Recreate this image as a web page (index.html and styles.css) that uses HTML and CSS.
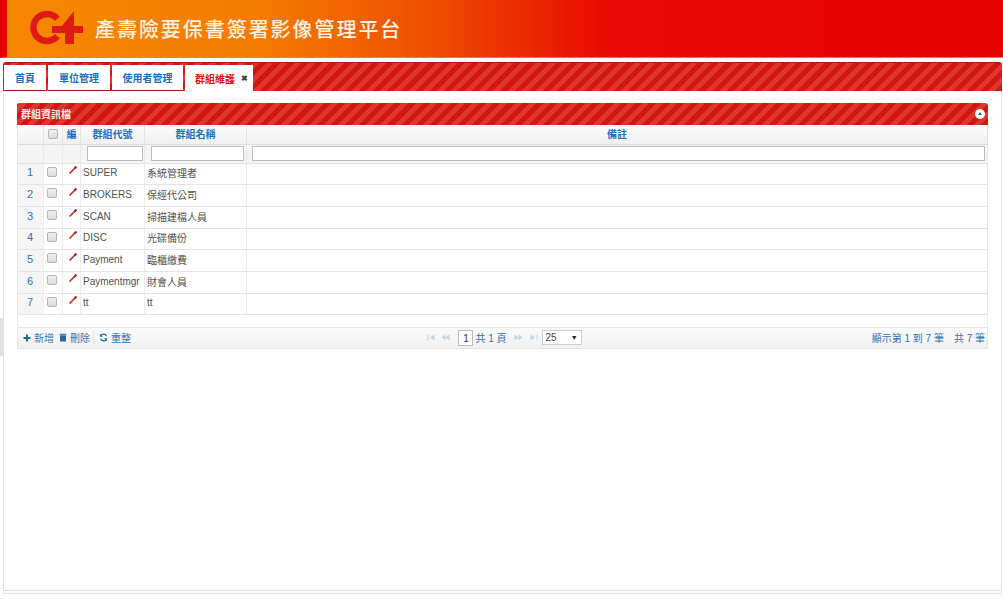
FILE: index.html
```html
<!DOCTYPE html>
<html lang="zh-Hant">
<head>
<meta charset="utf-8">
<title>產壽險要保書簽署影像管理平台</title>
<link rel="stylesheet" href="styles.css">
</head>
<body>
<header class="banner">
  <svg class="logo" width="53" height="34" viewBox="0 0 53 34">
    <path class="logo-c" d="M27.3 7.8 A13.5 13.5 0 1 0 27.3 25.2" />
    <path class="logo-plus" d="M44 0 L44 15 L53 15 L53 22 L44 22 L44 33 L35 33 L35 22 L22 22 L22 15 L32 15 Z" />
  </svg>
  <h1 class="banner-title">產壽險要保書簽署影像管理平台</h1>
</header>
<main class="workspace">
  <nav class="tabs">
    <a class="tab">首頁</a>
    <a class="tab">單位管理</a>
    <a class="tab">使用者管理</a>
    <a class="tab tab-active">群組維護 <span class="tab-close">✖</span></a>
  </nav>
  <section class="tab-body">
    <div class="panel">
      <div class="panel-title">
        <span>群組資訊檔</span>
        <span class="collapse"></span>
      </div>
      <table class="grid">
        <colgroup>
          <col class="c-num"><col class="c-check"><col class="c-edit"><col class="c-code"><col class="c-name"><col>
        </colgroup>
        <thead>
          <tr class="head-row">
            <th></th>
            <th><span class="box"></span></th>
            <th>編</th>
            <th>群組代號</th>
            <th>群組名稱</th>
            <th>備註</th>
          </tr>
          <tr class="filter-row">
            <th></th><th></th><th></th>
            <th><input class="filter f-code" type="text"></th>
            <th><input class="filter f-name" type="text"></th>
            <th><input class="filter f-note" type="text"></th>
          </tr>
        </thead>
        <tbody>
          <tr><td class="num">1</td><td class="chk"><span class="box"></span></td><td class="pen"><svg width="10" height="10" viewBox="0 0 10 10"><path d="M1.5 8.5 L7 3"/><path class="tip" d="M6.5 3.5 L8.5 1.5"/></svg></td><td>SUPER</td><td>系統管理者</td><td></td></tr>
          <tr><td class="num">2</td><td class="chk"><span class="box"></span></td><td class="pen"><svg width="10" height="10" viewBox="0 0 10 10"><path d="M1.5 8.5 L7 3"/><path class="tip" d="M6.5 3.5 L8.5 1.5"/></svg></td><td>BROKERS</td><td>保經代公司</td><td></td></tr>
          <tr><td class="num">3</td><td class="chk"><span class="box"></span></td><td class="pen"><svg width="10" height="10" viewBox="0 0 10 10"><path d="M1.5 8.5 L7 3"/><path class="tip" d="M6.5 3.5 L8.5 1.5"/></svg></td><td>SCAN</td><td>掃描建檔人員</td><td></td></tr>
          <tr><td class="num">4</td><td class="chk"><span class="box"></span></td><td class="pen"><svg width="10" height="10" viewBox="0 0 10 10"><path d="M1.5 8.5 L7 3"/><path class="tip" d="M6.5 3.5 L8.5 1.5"/></svg></td><td>DISC</td><td>光碟備份</td><td></td></tr>
          <tr><td class="num">5</td><td class="chk"><span class="box"></span></td><td class="pen"><svg width="10" height="10" viewBox="0 0 10 10"><path d="M1.5 8.5 L7 3"/><path class="tip" d="M6.5 3.5 L8.5 1.5"/></svg></td><td>Payment</td><td>臨櫃繳費</td><td></td></tr>
          <tr><td class="num">6</td><td class="chk"><span class="box"></span></td><td class="pen"><svg width="10" height="10" viewBox="0 0 10 10"><path d="M1.5 8.5 L7 3"/><path class="tip" d="M6.5 3.5 L8.5 1.5"/></svg></td><td>Paymentmgr</td><td>財會人員</td><td></td></tr>
          <tr><td class="num">7</td><td class="chk"><span class="box"></span></td><td class="pen"><svg width="10" height="10" viewBox="0 0 10 10"><path d="M1.5 8.5 L7 3"/><path class="tip" d="M6.5 3.5 L8.5 1.5"/></svg></td><td>tt</td><td>tt</td><td></td></tr>
        </tbody>
      </table>
      <div class="grid-spacer"></div>
      <div class="pager">
        <div class="pager-left">
          <span class="action"><svg width="8" height="8" viewBox="0 0 8 8"><path class="ico-fill" d="M3 0.5h2v2.5h2.5v2H5v2.5H3V5H0.5V3H3z"/></svg>新增</span>
          <span class="action"><svg width="8" height="9" viewBox="0 0 8 9"><path class="ico-fill" d="M1 2.2h6v6.3H1zM0.5 0.8h7v.9h-7z"/></svg>刪除</span>
          <span class="sep"></span>
          <span class="action"><svg width="9" height="9" viewBox="0 0 9 9"><path class="ico-line" d="M7.5 3.2A3.2 3.2 0 0 0 1.8 2.7M1.5 5.8A3.2 3.2 0 0 0 7.2 6.3"/><path class="ico-fill" d="M1 0.8v3h3zM8 8.2v-3h-3z"/></svg>重整</span>
        </div>
        <div class="pager-center">
          <svg class="nav" width="8" height="7" viewBox="0 0 8 7"><path d="M0.5 0.5h1v6h-1zM7.5 0.5v6L3 3.5z"/></svg>
          <svg class="nav" width="9" height="7" viewBox="0 0 9 7"><path d="M4.5 .5v6L0.5 3.5zM8.5 .5v6L4.5 3.5z"/></svg>
          <span class="page-box">1</span>
          <span class="page-text">共 1 頁</span>
          <svg class="nav nav-next" width="9" height="7" viewBox="0 0 9 7"><path d="M.5 .5v6L4.5 3.5zM4.5 .5v6L8.5 3.5z"/></svg>
          <svg class="nav" width="8" height="7" viewBox="0 0 8 7"><path d="M.5 .5v6L5 3.5zM6.5 .5h1v6h-1z"/></svg>
          <span class="page-size">25<span class="caret">▼</span></span>
        </div>
        <div class="pager-right">顯示第 1 到 7 筆　共 7 筆</div>
      </div>
    </div>
  </section>
  <div class="footer-line"></div>
</main>
<span class="side-handle"></span>
</body>
</html>
```
FILE: styles.css
```css
* { box-sizing: border-box; }
html, body { margin: 0; height: 599px; overflow: hidden; background: #fff; }
body {
  font-family: "Liberation Sans", "Noto Sans CJK TC", sans-serif;
  font-size: 10px;
  color: #444;
}
.banner {
  height: 58px;
  display: flex;
  align-items: center;
  gap: 12px;
  padding: 0 0 1px 23px;
  background: linear-gradient(90deg, #f68700 0%, #f47c00 25%, #ee5000 42%, #e80a00 60%, #e60000 100%);
  border-left: 7px solid #e60000;
  border-bottom: 1px solid #b98a70;
}
.logo { flex: none; }
.logo-c { fill: none; stroke: #df1a14; stroke-width: 6.5; }
.logo-plus { fill: #df1a14; }
.banner-title {
  margin: 0;
  font-size: 20px;
  font-weight: 500;
  letter-spacing: 1.95px;
  color: #fff0e0;
  white-space: nowrap;
}
.workspace {
  height: 541px;
  display: flex;
  flex-direction: column;
  padding: 4px 1px 0 3px;
}
.tabs {
  flex: none;
  height: 29px;
  display: flex;
  align-items: flex-end;
  gap: 2px;
  padding-left: 1px;
  border-radius: 3px 3px 0 0;
  border-top: 1px solid #b81510;
  background: repeating-linear-gradient(-45deg, #d01712 0 5px, #de362c 5px 10px);
}
.tab {
  height: 26px;
  width: 62px;
  display: flex;
  align-items: center;
  justify-content: center;
  background: #fff;
  color: #1a6fc0;
  font-weight: 700;
  font-size: 10px;
  border-bottom: 1px solid #a81510;
}
.tab:first-child { width: 42px; }
.tab:nth-child(3) { width: 71px; }
.tab-active {
  width: 68px;
  color: #e01010;
  border-bottom: 0;
  gap: 6px;
  justify-content: flex-start;
  padding-left: 10px;
}
.tab-close { color: #444; font-size: 8px; }
.tab-body {
  flex: 1;
  padding: 12px 13px 0;
  border-left: 1px solid #e2e2e2;
  border-right: 1px solid #e2e2e2;
  border-bottom: 1px solid #dcdcdc;
  margin-bottom: 2px;
}
.footer-line { flex: none; height: 1px; background: #dcdcdc; margin-bottom: 5px; }
.side-handle {
  position: absolute;
  left: 0;
  top: 318px;
  width: 3px;
  height: 38px;
  background: #e0e0e0;
}
.panel-title {
  height: 22px;
  display: flex;
  align-items: center;
  justify-content: space-between;
  padding: 0 3px 2px 4px;
  color: #fbeaea;
  font-weight: 700;
  font-size: 10px;
  border-radius: 3px 3px 0 0;
  background: repeating-linear-gradient(-45deg, #d01712 0 5px, #de362c 5px 10px);
}
.collapse {
  width: 10px;
  height: 10px;
  margin-top: 2px;
  border-radius: 50%;
  background: #fff;
  position: relative;
}
.collapse::after {
  content: "";
  position: absolute;
  left: 2.5px;
  top: 2.5px;
  border: 2.5px solid transparent;
  border-top: 0;
  border-bottom: 3px solid #555;
}
.grid {
  width: 100%;
  table-layout: fixed;
  border-collapse: collapse;
  border-left: 1px solid #e6e6e6;
  border-right: 1px solid #e6e6e6;
}
.c-num { width: 26px; }
.c-check { width: 19px; }
.c-edit { width: 18px; }
.c-code { width: 64px; }
.c-name { width: 102px; }
.head-row th {
  height: 19px;
  padding: 0 0 2px;
  color: #1a6fc0;
  font-size: 10px;
  font-weight: 700;
  background: linear-gradient(#fbfbfb, #f0f0f0);
  border-right: 1px solid #e4e4e4;
  border-bottom: 1px solid #dcdcdc;
}
.filter-row th {
  height: 19px;
  padding: 0 0 1px;
  background: #f4f4f4;
  border-right: 1px solid #e8e8e8;
  border-bottom: 1px solid #e2e2e2;
  text-align: left;
}
.filter {
  display: block;
  height: 15px;
  padding: 0;
  border: 1px solid #bdbdbd;
  background: #fff;
  outline: 0;
}
.f-code { width: 56px; margin-left: 6px; }
.f-name { width: 93px; margin-left: 6px; }
.f-note { width: 733px; margin-left: 5px; }
tbody td {
  height: 21.7px;
  padding: 0 0 2px 2px;
  font-size: 10px;
  color: #505050;
  border-right: 1px solid #ececec;
  border-bottom: 1px solid #e4e4e4;
}
tbody td:last-child { border-right: 0; }
td.num {
  padding: 0 1px 3px 0;
  text-align: center;
  font-size: 11px;
  color: #2f74b5;
  background: #f5f5f5;
}
td.chk, td.pen { padding: 0; text-align: center; }
td.chk .box { position: relative; top: -3px; left: -1px; }
td.pen svg { display: inline-block; position: relative; top: -3px; left: 1px; }
.pen path { stroke: #c4302a; stroke-width: 1.7; fill: none; }
.pen path.tip { stroke: #8f2422; stroke-width: 2; }
.box {
  display: inline-block;
  width: 10px;
  height: 10px;
  border: 1px solid #b4b4b4;
  border-radius: 2px;
  background: linear-gradient(#f0f0f0, #dcdcdc);
  vertical-align: middle;
}
.grid-spacer { height: 12px; border-left: 1px solid #eee; border-right: 1px solid #eee; }
.pager {
  height: 22px;
  display: grid;
  grid-template-columns: 1fr auto 1fr;
  align-items: center;
  padding: 0 2px 1px 5px;
  background: linear-gradient(#fafafa, #f1f1f1);
  border: 1px solid #e4e4e4;
  color: #2f74b5;
  font-size: 10px;
}
.pager-left { display: flex; align-items: center; gap: 5px; }
.action { display: inline-flex; align-items: center; gap: 3px; }
.ico-fill { fill: #2468a8; }
.ico-line { stroke: #2468a8; fill: none; stroke-width: 1.3; }
.sep { width: 1px; height: 15px; background: #e2e2e2; margin-left: -2px; }
.pager-center { display: flex; align-items: center; gap: 6px; position: relative; left: 0.5px; }
.nav { fill: #c0d4e8; }
.nav-next { margin-right: 1px; }
.page-box {
  width: 15px;
  height: 16px;
  border: 1px solid #bbb;
  background: #fff;
  color: #444;
  font-size: 11px;
  line-height: 14px;
  text-align: center;
  margin: 0 -4px 0 2px;
}
.page-text { margin-right: 1px; }
.page-size {
  width: 40px;
  height: 15px;
  margin-left: -2px;
  border: 1px solid #ccc;
  background: #fff;
  color: #444;
  line-height: 13px;
  padding-left: 3px;
  display: flex;
  justify-content: space-between;
}
.caret { font-size: 7px; padding-right: 3px; color: #222; }
.pager-right { text-align: right; white-space: nowrap; }
```
